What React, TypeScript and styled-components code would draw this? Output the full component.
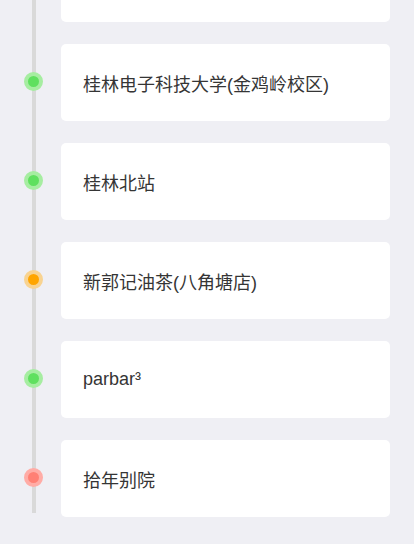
import React from "react";
import styled, { createGlobalStyle } from "styled-components";

const GlobalStyle = createGlobalStyle`
  html, body {
    margin: 0;
    padding: 0;
    background: #efeff4;
    overflow: hidden;
  }
  body {
    font-family: "Liberation Sans", "Noto Sans CJK SC", sans-serif;
    -webkit-font-smoothing: antialiased;
  }
`;

const Page = styled.div`
  width: 414px;
  height: 544px;
  overflow: hidden;
  background: #efeff4;
`;

const Timeline = styled.ul`
  position: relative;
  list-style: none;
  margin: -55px 0 0 0;
  padding: 0 24px 0 0;
  display: flex;
  flex-direction: column;
  gap: 22px;

  &::before {
    content: "";
    position: absolute;
    left: 32px;
    top: 0;
    bottom: 4px;
    width: 4px;
    background: #d9d9d9;
  }
`;

const Item = styled.li`
  display: flex;
  align-items: center;
`;

const Marker = styled.div`
  width: 61px;
  flex: none;
  display: flex;
  align-items: center;
  padding-left: 24px;
  box-sizing: border-box;
`;

type Tone = "green" | "orange" | "red" | "none";

const tones: Record<Tone, { ring: string; core: string }> = {
  green: { ring: "#a6eda1", core: "#5fe05f" },
  orange: { ring: "#f8d391", core: "#ffa500" },
  red: { ring: "#ffaca6", core: "#ff8075" },
  none: { ring: "transparent", core: "transparent" },
};

const Dot = styled.span<{ $tone: Tone }>`
  position: relative;
  z-index: 1;
  width: 11px;
  height: 11px;
  margin-bottom: 2px;
  border-radius: 50%;
  background: ${(p) => tones[p.$tone].core};
  border: 4px solid ${(p) => tones[p.$tone].ring};
`;

const Card = styled.div`
  flex: 1;
  height: 77px;
  box-sizing: border-box;
  background: #ffffff;
  border-radius: 5px;
  display: flex;
  align-items: center;
  padding-left: 22px;
  font-size: 18px;
  color: #353535;
  font-family: "Liberation Sans", "Noto Sans CJK SC", sans-serif;
  white-space: nowrap;
`;

const items: { name: string; tone: Tone }[] = [
  { name: "", tone: "none" },
  { name: "桂林电子科技大学(金鸡岭校区)", tone: "green" },
  { name: "桂林北站", tone: "green" },
  { name: "新郭记油茶(八角塘店)", tone: "orange" },
  { name: "parbar³", tone: "green" },
  { name: "拾年别院", tone: "red" },
];

export default function App() {
  return (
    <Page>
      <GlobalStyle />
      <Timeline>
        {items.map((it, i) => (
          <Item key={i}>
            <Marker>
              <Dot $tone={it.tone} />
            </Marker>
            <Card>{it.name}</Card>
          </Item>
        ))}
      </Timeline>
    </Page>
  );
}
